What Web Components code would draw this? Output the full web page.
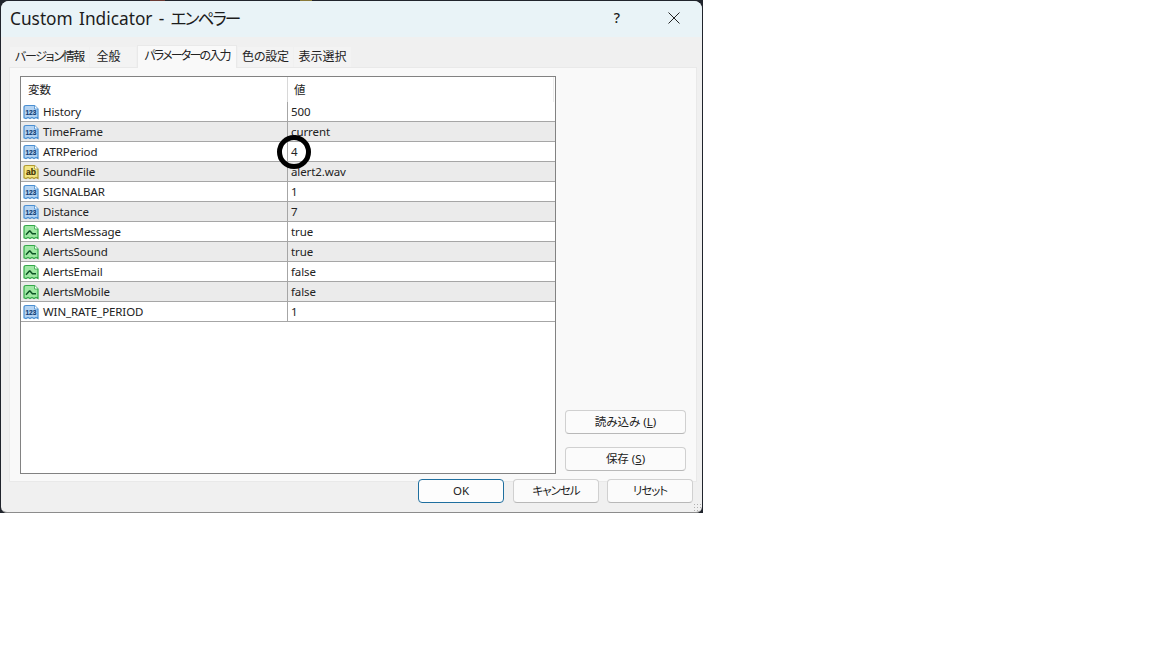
<!DOCTYPE html>
<html lang="ja"><head><meta charset="utf-8"><title>Custom Indicator</title>
<style>
html,body{margin:0;padding:0;background:#fff;width:1152px;height:648px;overflow:hidden}
body{font:12px "Noto Sans","Noto Sans CJK JP",sans-serif;color:#1a1a1a}
</style></head><body>
<x-window>
  <span slot="title">Custom Indicator - <span style="letter-spacing:-1.9px;font-size:16.6px">エンペラー</span></span>
  <x-tabs slot="tabs"></x-tabs>
  <x-params slot="table">
    <x-row icon="num" name="History" value="500"></x-row>
    <x-row icon="num" name="TimeFrame" value="current"></x-row>
    <x-row icon="num" name="ATRPeriod" value="4"></x-row>
    <x-row icon="str" name="SoundFile" value="alert2.wav"></x-row>
    <x-row icon="num" name="SIGNALBAR" value="1"></x-row>
    <x-row icon="num" name="Distance" value="7"></x-row>
    <x-row icon="bool" name="AlertsMessage" value="true"></x-row>
    <x-row icon="bool" name="AlertsSound" value="true"></x-row>
    <x-row icon="bool" name="AlertsEmail" value="false"></x-row>
    <x-row icon="bool" name="AlertsMobile" value="false"></x-row>
    <x-row icon="num" name="WIN_RATE_PERIOD" value="1"></x-row>
  </x-params>
  <x-button slot="side" wide>読み込み (<u>L</u>)</x-button>
  <x-button slot="side" wide>保存 (<u>S</u>)</x-button>
  <x-button slot="foot" primary style="margin-right:1px">OK</x-button>
  <x-button slot="foot" tight>キャンセル</x-button>
  <x-button slot="foot" tight>リセット</x-button>
</x-window>
<script>
const FONT='"Noto Sans","Noto Sans CJK JP",sans-serif';
class XWindow extends HTMLElement{constructor(){super();this.attachShadow({mode:'open'}).innerHTML=`<style>
:host{display:block;width:703px;height:513px;position:relative;background:linear-gradient(90deg,#20242c 0 150px,#6a3a34 150px 165px,#20242c 165px 300px,#8a7a3a 300px 312px,#20242c 312px)}
.frame{position:absolute;inset:1px 1px 0 1px;background:#f0f0f0;border-radius:8px 8px 6px 6px;border-bottom:1px solid #8c8c8c;display:flex;flex-direction:column;overflow:hidden}
.title{height:36px;flex:none;background:#e9f3f7;display:flex;align-items:center;padding:0 20px 0 9px}
.t{font:400 17.3px/36px ${FONT};color:#1c1c1c;flex:1;white-space:nowrap;font-feature-settings:"palt";word-spacing:1.8px}
.q{font:500 14px ${FONT};width:12px;text-align:center;margin-right:45px;margin-top:-3px}
.x{width:12px;height:12px;display:block;margin-right:2px;margin-top:-3px}
.body{flex:1;display:flex;flex-direction:column;padding:8px 5px 0 8px}
.panel{height:415px;box-sizing:border-box;flex:none;background:#f9f9f9;border:1px solid #e9e9e9;padding:8px 10px 7px 10px;display:flex;gap:9px}
.side{flex:1;display:flex;flex-direction:column;justify-content:flex-end;gap:13px;padding:0 9px 3px 0}
.foot{display:flex;justify-content:flex-end;gap:8px;margin-top:-3px;padding-right:4px}
.grip{position:absolute;right:1px;bottom:1px;width:9px;height:9px;background:radial-gradient(circle,#b0b0b0 0 1px,transparent 1px) 0 0/3px 3px}
.mark{position:absolute;left:277px;top:135px;width:34px;height:34px;box-sizing:border-box;border:5px solid #000;border-radius:50%}
</style><div class="frame"><div class="title"><div class="t"><slot name="title"></slot></div><span class="q">?</span><svg class="x" viewBox="0 0 12 12"><path d="M.5.5l11 11M11.5.5l-11 11" stroke="#222" fill="none"/></svg></div>
<div class="body"><slot name="tabs"></slot><div class="panel"><slot name="table"></slot><div class="side"><slot name="side"></slot></div></div><div class="foot"><slot name="foot"></slot></div></div></div><div class="grip"></div><div class="mark"></div>`;}}
class XTabs extends HTMLElement{constructor(){super();const t=[['バージョン情報',79,-1.3,0],['全般',46,0,9],['パラメーターの入力',100,-1.8,0],['色の設定',55,-.2,0],['表示選択',57,0,0]];
this.attachShadow({mode:'open'}).innerHTML=`<style>
:host{display:flex;align-items:flex-end;height:23px;padding-left:1px;gap:1px;font:12px ${FONT};margin-bottom:-1px;position:relative;z-index:1}
span{height:21px;box-sizing:border-box;background:#f3f3f3;border-bottom:1px solid #e9e9e9;display:flex;align-items:center;justify-content:center;white-space:nowrap;font-feature-settings:"palt";color:#222;padding-bottom:2px}
span.on{height:23px;background:#f9f9f9;border:1px solid #e9e9e9;border-bottom:0;padding-bottom:5px}
</style>`+t.map(([s,w,l,p],i)=>`<span class="${i==2?'on':''}" style="width:${w}px;letter-spacing:${l}px;padding-right:${p}px">${s}</span>`).join('');}}
class XParams extends HTMLElement{constructor(){super();this.attachShadow({mode:'open'}).innerHTML=`<style>
:host{display:block;width:536px;height:398px;flex:none;box-sizing:border-box;border:1px solid #828282;background:#fff;font:12px ${FONT}}
.h{display:flex;height:25px}
.h div{display:flex;align-items:center;font-size:11.5px;color:#222;box-sizing:border-box;height:25px;padding-bottom:1px}
.a{width:267px;padding-left:7px;border-right:1px solid #d8d8d8}
.b{width:266px;padding-left:6px;border-right:1px solid #ececec}
</style><div class="h"><div class="a">変数</div><div class="b">値</div></div><slot></slot>`;}}
const ICON={num:['#b4d3f2','#4a8fd2','123','#0c3a72',6.6],str:['#f3e584','#b09a30','ab','#3e3000',8.6],bool:['#9fe8a4','#35a84a','','',0]};
class XRow extends HTMLElement{constructor(){super();const k=this.getAttribute('icon');const [f,s,t,c,z]=ICON[k];
const inner=k=='bool'?`<path d="M3 10.8l3.4-3.800h.6l2.400 2.800H13" fill="none" stroke="#0c5424" stroke-width="1.5"/>`:`<text x="7.9" y="${k=='str'?11:10.9}" text-anchor="middle" font-family="Liberation Sans" font-weight="700" font-size="${z}" fill="${c}" stroke="${c}" stroke-width=".15">${t}</text>`;
this.attachShadow({mode:'open'}).innerHTML=`<style>
:host{display:flex;height:20px;box-sizing:border-box;border-bottom:1px solid #a6a6a6;color:#222;align-items:stretch}
:host(:nth-of-type(even)){background:#ebebeb}
.n{width:267px;box-sizing:border-box;border-right:1px solid #a6a6a6;display:flex;align-items:center;gap:4px;padding-left:2px}
.v{padding-left:3px;display:flex;align-items:center}
svg{width:16px;height:16px;flex:none}
span{font-size:11.5px;letter-spacing:-.1px;white-space:nowrap}
</style><div class="n"><svg viewBox="0 0 16 16"><path d="M1 3.5q0-2 2-2h8.500l3.500 3.500v9.500l-2-1-2 1-2-1-2 1-2-1-2 1-2-.6z" fill="${f}" stroke="${s}" stroke-width="1.2"/><path d="M11.500 1.500v3.500h3.500" fill="#fff" stroke="${s}" stroke-width=".8"/>${inner}</svg><span>${this.getAttribute('name')}</span></div><div class="v"><span>${this.getAttribute('value')}</span></div>`;}}
class XButton extends HTMLElement{constructor(){super();this.attachShadow({mode:'open'}).innerHTML=`<style>
:host{display:flex;align-items:center;justify-content:center;width:86px;height:24px;box-sizing:border-box;background:#fbfbfb;border:1px solid #d0d0d0;border-bottom-color:#b8b8b8;border-radius:4px;font:11.5px ${FONT};color:#222;white-space:nowrap;font-feature-settings:"palt";padding-bottom:2px}
:host([primary]){border:1.5px solid #1f6f9f;background:#fdfdfd}
:host([wide]){width:121px}
:host([tight]){letter-spacing:-1px}
</style><slot></slot>`;}}
customElements.define('x-window',XWindow);customElements.define('x-tabs',XTabs);customElements.define('x-params',XParams);customElements.define('x-row',XRow);customElements.define('x-button',XButton);
</script></body></html>
